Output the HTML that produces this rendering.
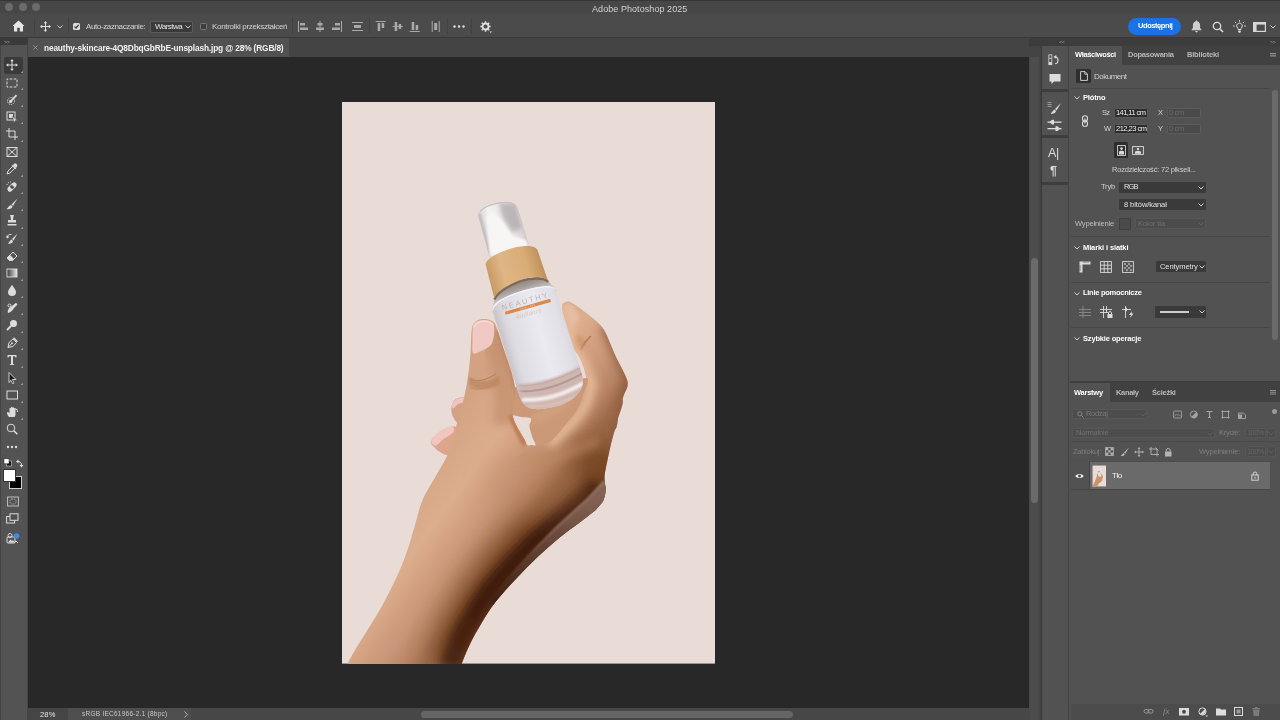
<!DOCTYPE html>
<html lang="pl">
<head>
<meta charset="utf-8">
<title>Adobe Photoshop 2025</title>
<style>
*{box-sizing:border-box;margin:0;padding:0}
html,body{width:1280px;height:720px;overflow:hidden;background:#282828}
body{font-family:"Liberation Sans",sans-serif;font-size:7.5px;color:#d6d6d6;position:relative;-webkit-font-smoothing:antialiased}
.abs{position:absolute}
.t{position:absolute;white-space:nowrap;line-height:10px;will-change:transform}
.b{font-weight:bold}
#titlebar{left:0;top:0;width:1280px;height:15px;background:linear-gradient(#2e2e2e 0,#474747 1.500px,#474747 12px,#4b4b4b 15px)}
#optbar{left:0;top:15px;width:1280px;height:22px;background:#4b4b4b}
#optline{left:0;top:37px;width:1280px;height:1px;background:#3a3a3a}
#tabbar{left:0;top:38px;width:1280px;height:19px;background:#444}
#doctab{left:28px;top:38px;width:261px;height:19px;background:#515151}
#tools{left:0;top:38px;width:28px;height:682px;background:linear-gradient(90deg,#3e3e3e 0,#535353 1.500px,#535353 26.500px,#3c3c3c 28px)}
#toolshead{left:0;top:38px;width:28px;height:7px;background:#3a3a3a}
#canvas{left:28px;top:57px;width:1001px;height:651px;background:#282828}
#status{left:28px;top:708px;width:1001px;height:12px;background:#4e4e4e}
#vscroll{left:1029px;top:57px;width:12px;height:663px;background:linear-gradient(90deg,#474747 0,#4d4d4d 2px,#4d4d4d 9px,#424242 11px)}
#vthumb{left:1031px;top:258px;width:7px;height:245px;background:#6a6a6a;border-radius:4px}
#strip{left:1041px;top:45px;width:27px;height:675px;background:#525252}
#rpanel{left:1068px;top:45px;width:212px;height:675px;background:#525252}
</style>
</head>
<body>
<div class="abs" id="titlebar"></div>
<div class="abs" id="optbar"></div>
<div class="abs" id="optline"></div>
<div class="abs" id="tabbar"></div>
<div class="abs" id="doctab"></div>
<div class="abs" id="canvas"></div>
<div class="abs" id="status"></div>
<div class="abs" id="vscroll"></div>
<div class="abs" id="vthumb"></div>
<div class="abs" id="tools"></div>
<div class="abs" id="toolshead"></div>
<div class="abs" id="strip"></div>
<div class="abs" id="rpanel"></div>


<!-- ===== TITLE BAR ===== -->
<div class="abs" style="left:5px;top:3px;width:8px;height:8px;border-radius:50%;background:#6b6b6b"></div>
<div class="abs" style="left:18.500px;top:3px;width:8px;height:8px;border-radius:50%;background:#6b6b6b"></div>
<div class="abs" style="left:32px;top:3px;width:8px;height:8px;border-radius:50%;background:#6b6b6b"></div>
<div class="t" id="ttl" style="left:591.500px;top:3.600px;font-size:9px;color:#d2d2d2;letter-spacing:0.065px">Adobe Photoshop 2025</div>

<!-- ===== OPTIONS BAR ===== -->
<svg class="abs" style="left:12px;top:20px" width="13" height="12" viewBox="0 0 13 12"><path d="M6.500,0.500 L12.500,6 L11,6 L11,11.500 L7.800,11.500 L7.800,7.800 L5.200,7.800 L5.200,11.500 L2,11.500 L2,6 L0.500,6 Z" fill="#e6e6e6"/></svg>
<div class="abs" style="left:34px;top:18px;width:1px;height:16px;background:#424242"></div>
<svg class="abs" style="left:40px;top:20.500px" width="11" height="11" viewBox="0 0 11 11"><g stroke="#e0e0e0" stroke-width="1" fill="#e0e0e0"><path d="M5.500,1.500V9.500M1.500,5.500H9.500" fill="none"/><path d="M5.500,0L7.200,2.200H3.800Z M5.500,11L7.200,8.800H3.800Z M0,5.500L2.200,3.800V7.200Z M11,5.500L8.800,3.800V7.200Z" stroke="none"/></g></svg>
<svg class="abs" style="left:57px;top:24.500px" width="6" height="4" viewBox="0 0 6 4"><path d="M.5,.5L3,3L5.500,.5" fill="none" stroke="#cfcfcf" stroke-width="1"/></svg>
<div class="abs" style="left:68px;top:18px;width:1px;height:16px;background:#424242"></div>
<div class="abs" style="left:73px;top:23px;width:7px;height:7px;border-radius:1.500px;background:#dcdcdc"></div>
<svg class="abs" style="left:73px;top:23px" width="7" height="7" viewBox="0 0 7 7"><path d="M1.500,3.600L3,5L5.600,1.800" fill="none" stroke="#333" stroke-width="1.200"/></svg>
<div class="t" id="o1" style="left:85.500px;top:21.500px;font-size:8px;color:#d4d4d4;letter-spacing:-0.378px">Auto-zaznaczanie:</div>
<div class="abs" style="left:149.500px;top:20.500px;width:43px;height:12px;background:#3a3a3a;border:1px solid #5c5c5c;border-radius:2px"></div>
<div class="t" id="o2" style="left:154.500px;top:21.500px;font-size:8px;color:#e6e6e6;letter-spacing:-0.518px">Warstwa</div>
<svg class="abs" style="left:185px;top:25px" width="6" height="4" viewBox="0 0 6 4"><path d="M.5,.5L3,3L5.500,.5" fill="none" stroke="#cfcfcf" stroke-width="1"/></svg>
<div class="abs" style="left:199.500px;top:23px;width:7px;height:7px;border-radius:1.500px;background:#3d3d3d;border:1px solid #777"></div>
<div class="t" id="o3" style="left:212px;top:21.500px;font-size:8px;color:#d4d4d4;letter-spacing:-0.307px">Kontrolki przekształceń</div>
<div class="abs" style="left:292px;top:18px;width:1px;height:16px;background:#424242"></div>
<!-- align icons -->
<svg class="abs" style="left:298px;top:20px" width="150" height="13" viewBox="0 0 150 13" fill="#a9a9a9">
<rect x="0" y="1" width="1" height="11"/><rect x="2" y="3" width="5" height="2.500"/><rect x="2" y="7.500" width="8" height="2.500"/>
<rect x="21.500" y="1" width="1" height="11"/><rect x="19.500" y="3" width="5" height="2.500"/><rect x="18" y="7.500" width="8" height="2.500"/>
<rect x="43" y="1" width="1" height="11"/><rect x="37" y="3" width="5" height="2.500"/><rect x="34" y="7.500" width="8" height="2.500"/>
<rect x="54" y="2" width="11" height="1"/><rect x="54" y="10" width="11" height="1"/><rect x="56" y="5" width="7" height="3"/>
<g transform="translate(-3.300 0)"><rect x="81" y="1" width="10" height="1"/><rect x="83" y="3" width="2.500" height="8"/><rect x="87" y="3" width="2.500" height="5"/>
<rect x="98" y="6" width="10" height="1"/><rect x="100" y="2" width="2.500" height="9"/><rect x="104" y="4" width="2.500" height="5"/>
<rect x="115" y="11" width="10" height="1"/><rect x="117" y="2" width="2.500" height="8"/><rect x="121" y="5" width="2.500" height="5"/>
<rect x="137" y="1" width="1" height="11"/><rect x="144" y="1" width="1" height="11"/><rect x="139.500" y="3" width="3" height="7"/></g>
</svg>
<div class="abs" style="left:369px;top:18px;width:1px;height:16px;background:#424242"></div>
<div class="abs" style="left:447px;top:18px;width:1px;height:16px;background:#424242"></div>
<svg class="abs" style="left:453px;top:24.500px" width="12" height="3" viewBox="0 0 12 3" fill="#e0e0e0"><circle cx="1.500" cy="1.500" r="1.200"/><circle cx="6" cy="1.500" r="1.200"/><circle cx="10.500" cy="1.500" r="1.200"/></svg>
<div class="abs" style="left:471px;top:18px;width:1px;height:16px;background:#424242"></div>
<svg class="abs" style="left:479.500px;top:20.500px" width="12" height="12" viewBox="0 0 12 12"><circle cx="5.500" cy="5.500" r="3" fill="none" stroke="#e0e0e0" stroke-width="1.800"/><g stroke="#e0e0e0" stroke-width="1.600"><path d="M5.500,.3V2 M5.500,9V10.700 M.3,5.500H2 M9,5.500H10.700 M1.800,1.800L3,3 M8,8L9.200,9.200 M1.800,9.200L3,8 M8,3L9.200,1.800"/></g><path d="M9.500,10.500h2.500l-1.250,1.500z" fill="#e0e0e0"/></svg>
<!-- right side -->
<div class="abs" style="left:1128px;top:17.500px;width:53px;height:17px;border-radius:8.500px;background:#1b72e4"></div>
<div class="t b" id="o4" style="left:1137.500px;top:21px;font-size:7.500px;color:#fff;letter-spacing:-0.425px">Udostępnij</div>
<svg class="abs" style="left:1190.500px;top:20px" width="11" height="13" viewBox="0 0 11 13" fill="#cfcfcf"><path d="M5.500,.5c.6,0 1,.4 1,1c1.800,.5 2.600,2 2.600,4v2.500l1.400,1.700v.6h-10v-.6l1.400,-1.700v-2.500c0,-2 .8,-3.500 2.600,-4c0,-.6 .4,-1 1,-1z"/><path d="M4.200,11h2.600c0,.8 -.6,1.400 -1.300,1.400s-1.300,-.6 -1.300,-1.400z"/></svg>
<svg class="abs" style="left:1211.500px;top:20.500px" width="12" height="12" viewBox="0 0 12 12"><circle cx="5" cy="5" r="3.700" fill="none" stroke="#dcdcdc" stroke-width="1.300"/><path d="M7.800,7.800L11,11" stroke="#dcdcdc" stroke-width="1.600"/></svg>
<svg class="abs" style="left:1232.500px;top:19.500px" width="13" height="14" viewBox="0 0 13 14"><path d="M6.500,3.200c1.700,0 2.800,1.200 2.800,2.700c0,1 -.5,1.600 -1,2.200c-.3,.4 -.5,.8 -.5,1.400h-2.600c0,-.6 -.2,-1 -.5,-1.400c-.5,-.6 -1,-1.200 -1,-2.200c0,-1.500 1.100,-2.700 2.800,-2.700z" fill="none" stroke="#dcdcdc" stroke-width="1"/><path d="M5.200,10.500h2.600v1.500l-.6,.8h-1.400l-.6,-.8z" fill="#dcdcdc"/><g stroke="#dcdcdc" stroke-width=".9"><path d="M6.500,0V1.800 M2,1.800L3.100,3 M11,1.800L9.900,3 M0,6H1.800 M11.200,6H13"/></g></svg>
<svg class="abs" style="left:1253px;top:22px" width="13" height="10" viewBox="0 0 13 10"><rect x=".6" y=".6" width="11.800" height="8.800" fill="none" stroke="#d6d6d6" stroke-width="1.200"/><rect x=".6" y=".6" width="11.800" height="2" fill="#d6d6d6"/><rect x=".6" y="2" width="3" height="7" fill="#d6d6d6"/></svg>
<svg class="abs" style="left:1270px;top:25px" width="6" height="4" viewBox="0 0 6 4"><path d="M.5,.5L3,3L5.500,.5" fill="none" stroke="#cfcfcf" stroke-width="1"/></svg>

<!-- ===== DOC TAB ===== -->
<svg class="abs" style="left:33px;top:44.500px" width="5" height="5" viewBox="0 0 5 5"><path d="M.3,.3L4.700,4.700M4.700,.3L.3,4.700" stroke="#a0a0a0" stroke-width=".8"/></svg>
<div class="t b" id="tab1" style="left:44px;top:42.500px;font-size:8.300px;color:#f2f2f2;letter-spacing:-0.143px">neauthy-skincare-4Q8DbqGbRbE-unsplash.jpg @ 28% (RGB/8)</div>
<div class="t" style="left:3.500px;top:36.500px;font-size:5.500px;color:#9d9d9d;letter-spacing:-.5px">&gt;&gt;</div>


<!-- ===== LEFT TOOLBAR ===== -->
<div class="abs" style="left:3.500px;top:57px;width:19.500px;height:17px;border-radius:2px;background:#3a3a3a"></div>
<svg class="abs" style="left:6.3px;top:59.4px" width="12" height="12" viewBox="0 0 12 12"><g stroke="#dcdcdc" fill="none" stroke-width="1"><path d="M6,1.500V10.500M1.500,6H10.500"/></g><path d="M6,0L7.800,2.300H4.200Z M6,12L7.800,9.700H4.200Z M0,6L2.300,4.200V7.800Z M12,6L9.700,4.200V7.800Z" fill="#dcdcdc"/></svg>
<svg class="abs" style="left:20px;top:69.9px" width="3" height="3" viewBox="0 0 3 3"><path d="M3,.8V3H.8Z" fill="#9c9c9c"/></svg>
<svg class="abs" style="left:6.3px;top:76.8px" width="12" height="12" viewBox="0 0 12 12"><rect x="1" y="2" width="10" height="8" stroke="#dcdcdc" fill="none" stroke-width="1" stroke-dasharray="2.600 1.400" stroke-dashoffset="1.300"/></svg>
<svg class="abs" style="left:20px;top:87.3px" width="3" height="3" viewBox="0 0 3 3"><path d="M3,.8V3H.8Z" fill="#9c9c9c"/></svg>
<svg class="abs" style="left:6.3px;top:93.6px" width="12" height="12" viewBox="0 0 12 12"><circle cx="5" cy="7" r="3.500" stroke="#dcdcdc" fill="none" stroke-width="1" stroke-dasharray="1.200 1"/><path d="M5,7L10.500,1.200" stroke="#dcdcdc" stroke-width="1.800"/><circle cx="4.600" cy="7.400" r="1.600" fill="#dcdcdc"/></svg>
<svg class="abs" style="left:20px;top:104.1px" width="3" height="3" viewBox="0 0 3 3"><path d="M3,.8V3H.8Z" fill="#9c9c9c"/></svg>
<svg class="abs" style="left:6.3px;top:110.8px" width="12" height="12" viewBox="0 0 12 12"><rect x="1" y="1" width="8" height="8" stroke="#dcdcdc" fill="none" stroke-width="1"/><rect x="3" y="3" width="4" height="4" fill="#dcdcdc"/><path d="M6.500,5.500L11.500,9.500L9,9.800L8,12Z" fill="#dcdcdc" stroke="#4f4f4f" stroke-width=".5"/></svg>
<svg class="abs" style="left:20px;top:121.3px" width="3" height="3" viewBox="0 0 3 3"><path d="M3,.8V3H.8Z" fill="#9c9c9c"/></svg>
<svg class="abs" style="left:6.3px;top:128.0px" width="12" height="12" viewBox="0 0 12 12"><g stroke="#dcdcdc" fill="none" stroke-width="1" stroke-width="1.300"><path d="M3,0V9H12M0,3H9V12"/></g></svg>
<svg class="abs" style="left:20px;top:138.5px" width="3" height="3" viewBox="0 0 3 3"><path d="M3,.8V3H.8Z" fill="#9c9c9c"/></svg>
<svg class="abs" style="left:6.3px;top:145.7px" width="12" height="12" viewBox="0 0 12 12"><rect x="1" y="1.500" width="10" height="9" stroke="#dcdcdc" fill="none" stroke-width="1"/><path d="M1,1.500L11,10.500M11,1.500L1,10.500" stroke="#dcdcdc" fill="none" stroke-width="1"/></svg>
<svg class="abs" style="left:6.3px;top:163.2px" width="12" height="12" viewBox="0 0 12 12"><path d="M1,11L2,8L7,3L9,5L4,10Z" stroke="#dcdcdc" fill="none" stroke-width="1"/><path d="M7,2L8.500,.5C9.500,-.2 12,2 11.200,3.200L10,5Z" fill="#dcdcdc"/><path d="M6.200,2.200L9.800,5.800" stroke="#dcdcdc" stroke-width="1.500"/></svg>
<svg class="abs" style="left:20px;top:173.7px" width="3" height="3" viewBox="0 0 3 3"><path d="M3,.8V3H.8Z" fill="#9c9c9c"/></svg>
<svg class="abs" style="left:6.3px;top:180.6px" width="12" height="12" viewBox="0 0 12 12"><g transform="rotate(-45 6 6)"><rect x="0.500" y="3.500" width="11" height="5" rx="2.500" fill="#dcdcdc"/><rect x="4.500" y="4.200" width="3" height="3.600" fill="#4f4f4f"/></g><path d="M1,4A4,4 0 0 1 5,1" stroke="#dcdcdc" fill="none" stroke-width="1" stroke-dasharray="1.200 1"/></svg>
<svg class="abs" style="left:20px;top:191.1px" width="3" height="3" viewBox="0 0 3 3"><path d="M3,.8V3H.8Z" fill="#9c9c9c"/></svg>
<svg class="abs" style="left:6.3px;top:197.9px" width="12" height="12" viewBox="0 0 12 12"><path d="M11.500,.5L5.500,6.500L7,8Z" fill="#dcdcdc"/><path d="M5,7L6.500,8.500C6,11 3,11.500 .5,11C2.500,10 2.500,7.500 5,7Z" fill="#dcdcdc"/></svg>
<svg class="abs" style="left:20px;top:208.4px" width="3" height="3" viewBox="0 0 3 3"><path d="M3,.8V3H.8Z" fill="#9c9c9c"/></svg>
<svg class="abs" style="left:6.3px;top:215.2px" width="12" height="12" viewBox="0 0 12 12"><path d="M4.500,1.500a1.800,1.800 0 1 1 3,0L7,5H10V7.500H2V5H5Z" fill="#dcdcdc"/><rect x="1.500" y="9" width="9" height="1.500" fill="#dcdcdc"/></svg>
<svg class="abs" style="left:20px;top:225.7px" width="3" height="3" viewBox="0 0 3 3"><path d="M3,.8V3H.8Z" fill="#9c9c9c"/></svg>
<svg class="abs" style="left:6.3px;top:232.5px" width="12" height="12" viewBox="0 0 12 12"><path d="M11.500,.5L6,6L7.500,7.500Z" fill="#dcdcdc"/><path d="M5.500,6.500L7,8C6.500,10.500 4,11 2,10.500C3.500,9.500 3.500,7.500 5.500,6.500Z" fill="#dcdcdc"/><path d="M1,5A3.500,3.500 0 0 1 5.500,1.500" stroke="#dcdcdc" fill="none" stroke-width="1"/><path d="M.2,2.500L1,5.500L3.500,4Z" fill="#dcdcdc"/></svg>
<svg class="abs" style="left:20px;top:243.0px" width="3" height="3" viewBox="0 0 3 3"><path d="M3,.8V3H.8Z" fill="#9c9c9c"/></svg>
<svg class="abs" style="left:6.3px;top:249.8px" width="12" height="12" viewBox="0 0 12 12"><path d="M1,8L7,2L11,6L6.500,10.500H3.500Z" stroke="#dcdcdc" fill="none" stroke-width="1" stroke-width="1.100"/><path d="M4,5L8,9L6.500,10.500H3.500L1,8Z" fill="#dcdcdc"/></svg>
<svg class="abs" style="left:20px;top:260.3px" width="3" height="3" viewBox="0 0 3 3"><path d="M3,.8V3H.8Z" fill="#9c9c9c"/></svg>
<svg class="abs" style="left:6.3px;top:267.1px" width="12" height="12" viewBox="0 0 12 12"><defs><linearGradient id="tg"><stop offset="0" stop-color="#3a3a3a"/><stop offset="1" stop-color="#e8e8e8"/></linearGradient></defs><rect x="1" y="2" width="10" height="8" fill="url(#tg)" stroke="#dcdcdc" stroke-width=".9"/></svg>
<svg class="abs" style="left:20px;top:277.6px" width="3" height="3" viewBox="0 0 3 3"><path d="M3,.8V3H.8Z" fill="#9c9c9c"/></svg>
<svg class="abs" style="left:6.3px;top:284.4px" width="12" height="12" viewBox="0 0 12 12"><path d="M6,.8C8,4 10,6 10,8A4,4 0 0 1 2,8C2,6 4,4 6,.8Z" fill="#dcdcdc"/></svg>
<svg class="abs" style="left:20px;top:294.9px" width="3" height="3" viewBox="0 0 3 3"><path d="M3,.8V3H.8Z" fill="#9c9c9c"/></svg>
<svg class="abs" style="left:6.3px;top:301.7px" width="12" height="12" viewBox="0 0 12 12"><path d="M2,11C1,8 3,6 6,4L10,.8L11.500,2.500L8,6C7,8 5,10.500 2,11Z" fill="#dcdcdc"/><circle cx="3.500" cy="3.500" r="1.500" stroke="#dcdcdc" fill="none" stroke-width="1"/></svg>
<svg class="abs" style="left:20px;top:312.2px" width="3" height="3" viewBox="0 0 3 3"><path d="M3,.8V3H.8Z" fill="#9c9c9c"/></svg>
<svg class="abs" style="left:6.3px;top:319.2px" width="12" height="12" viewBox="0 0 12 12"><circle cx="7.500" cy="4.500" r="3.500" fill="#dcdcdc"/><path d="M5,7L1,11" stroke="#dcdcdc" stroke-width="1.800"/></svg>
<svg class="abs" style="left:20px;top:329.7px" width="3" height="3" viewBox="0 0 3 3"><path d="M3,.8V3H.8Z" fill="#9c9c9c"/></svg>
<svg class="abs" style="left:6.3px;top:336.8px" width="12" height="12" viewBox="0 0 12 12"><path d="M2,10.500L3,5.500L7,2L10.500,5.500L7,9.500Z" stroke="#dcdcdc" fill="none" stroke-width="1" stroke-width="1.100"/><circle cx="6" cy="6.300" r="1" fill="#dcdcdc"/><path d="M2,10.500L5.500,6.800" stroke="#dcdcdc" fill="none" stroke-width="1" stroke-width=".8"/><path d="M7.500,.8L11.500,4.800" stroke="#dcdcdc" stroke-width="1.600"/></svg>
<svg class="abs" style="left:20px;top:347.3px" width="3" height="3" viewBox="0 0 3 3"><path d="M3,.8V3H.8Z" fill="#9c9c9c"/></svg>
<svg class="abs" style="left:6.3px;top:354.3px" width="12" height="12" viewBox="0 0 12 12"><path d="M1.500,1H10.500V3.500H9.500L9,2.300H7V10L8.300,10.400V11H3.700V10.400L5,10V2.300H3L2.500,3.500H1.500Z" fill="#dcdcdc"/></svg>
<svg class="abs" style="left:20px;top:364.8px" width="3" height="3" viewBox="0 0 3 3"><path d="M3,.8V3H.8Z" fill="#9c9c9c"/></svg>
<svg class="abs" style="left:6.3px;top:371.8px" width="12" height="12" viewBox="0 0 12 12"><path d="M3,.5L10,7.500H6.300L8,11L6.500,11.700L4.800,8.200L3,10.500Z" fill="#1e1e1e" stroke="#dcdcdc" stroke-width=".9"/></svg>
<svg class="abs" style="left:20px;top:382.3px" width="3" height="3" viewBox="0 0 3 3"><path d="M3,.8V3H.8Z" fill="#9c9c9c"/></svg>
<svg class="abs" style="left:6.3px;top:389.0px" width="12" height="12" viewBox="0 0 12 12"><rect x="1" y="2" width="10.500" height="8" stroke="#dcdcdc" fill="none" stroke-width="1" stroke-width="1.200"/></svg>
<svg class="abs" style="left:20px;top:399.5px" width="3" height="3" viewBox="0 0 3 3"><path d="M3,.8V3H.8Z" fill="#9c9c9c"/></svg>
<svg class="abs" style="left:6.3px;top:406.0px" width="12" height="12" viewBox="0 0 12 12"><path d="M3,11C1,8.500 .5,6.500 1.500,6C2.500,5.700 3,6.700 3.500,7.500V2.500C3.500,1.500 5,1.500 5,2.500V1.500C5,.5 6.500,.5 6.500,1.500V2C6.500,1 8,1 8,2V3C8,2.200 9.500,2.200 9.500,3V8C9.500,9.500 9,10.500 8.500,11Z" fill="#dcdcdc"/><path d="M8.500,8.500A3,3 0 1 1 11.500,6" stroke="#dcdcdc" fill="none" stroke-width="1" stroke-width=".8"/></svg>
<svg class="abs" style="left:20px;top:416.5px" width="3" height="3" viewBox="0 0 3 3"><path d="M3,.8V3H.8Z" fill="#9c9c9c"/></svg>
<svg class="abs" style="left:6.3px;top:423.3px" width="12" height="12" viewBox="0 0 12 12"><circle cx="5" cy="5" r="3.800" stroke="#dcdcdc" fill="none" stroke-width="1" stroke-width="1.200"/><path d="M7.800,7.800L11.300,11.300" stroke="#dcdcdc" stroke-width="1.600"/></svg>
<svg class="abs" style="left:6.3px;top:440.5px" width="12" height="12" viewBox="0 0 12 12"><circle cx="2" cy="6" r="1.200" fill="#dcdcdc"/><circle cx="6" cy="6" r="1.200" fill="#dcdcdc"/><circle cx="10" cy="6" r="1.200" fill="#dcdcdc"/></svg>
<svg class="abs" style="left:2.500px;top:457.500px" width="22" height="10" viewBox="0 0 22 10"><rect x="3.500" y="3" width="5" height="5" fill="#111" stroke="#ddd" stroke-width=".6"/><rect x="1" y=".8" width="5" height="5" fill="#fff" stroke="#222" stroke-width=".5"/><path d="M14.500,3.500A3.500,3.500 0 0 1 18.500,7.500" fill="none" stroke="#dcdcdc" stroke-width="1"/><path d="M13,3.500L15.500,1.500V5.500Z M18.500,9.500L16.500,7H20.500Z" fill="#dcdcdc"/></svg>
<div class="abs" style="left:9px;top:476px;width:13px;height:13px;background:#000;border:1px solid #d0d0d0"></div>
<div class="abs" style="left:3px;top:469px;width:13px;height:13px;background:#fff;border:1px solid #333"></div>
<svg class="abs" style="left:6.500px;top:495.500px" width="12" height="11" viewBox="0 0 12 11"><rect x=".6" y="1" width="10.800" height="9" fill="none" stroke="#c8c8c8" stroke-width=".9"/><rect x="3" y="3" width="6" height="5" rx="2" fill="none" stroke="#c8c8c8" stroke-width=".8" stroke-dasharray="1 .8"/></svg>
<svg class="abs" style="left:6px;top:512.500px" width="13" height="11" viewBox="0 0 13 11"><rect x=".6" y="3.500" width="8" height="6.500" fill="none" stroke="#dcdcdc" stroke-width="1"/><rect x="4" y=".8" width="8" height="6.500" fill="#4f4f4f" stroke="#dcdcdc" stroke-width="1"/></svg>
<svg class="abs" style="left:5.500px;top:531.500px" width="15" height="13" viewBox="0 0 15 13"><rect x="1" y="5" width="8" height="6" rx="1" fill="none" stroke="#dcdcdc" stroke-width="1"/><path d="M2,10.500L4.500,7.500L6,9L7,8L8.500,10.500Z" fill="#dcdcdc"/><circle cx="4" cy="3.500" r="2" fill="none" stroke="#dcdcdc" stroke-width=".9"/><circle cx="10.500" cy="4" r="2.800" fill="#3d8be8"/><path d="M8,11L10,9L12,11" fill="none" stroke="#dcdcdc" stroke-width="1"/></svg>


<!-- ===== RIGHT: header rows ===== -->
<div class="abs" style="left:1029px;top:38px;width:251px;height:7.500px;background:#3c3c3c"></div>
<div class="t" style="left:1058.500px;top:36.500px;font-size:5.500px;color:#9d9d9d;letter-spacing:-.5px">&lt;&lt;</div>
<div class="t" style="left:1270px;top:36.500px;font-size:5.500px;color:#9d9d9d;letter-spacing:-.5px">&gt;&gt;</div>
<div class="abs" style="left:1041px;top:45.500px;width:1px;height:675px;background:#3a3a3a"></div>
<div class="abs" style="left:1067.800px;top:45.500px;width:1.700px;height:675px;background:#434343"></div>
<!-- icon strip groups -->
<div class="abs" style="left:1042px;top:89.3px;width:25.800px;height:2.600px;background:#3e3e3e"></div>
<div class="abs" style="left:1042px;top:135.3px;width:25.800px;height:2.600px;background:#3e3e3e"></div>
<div class="abs" style="left:1042px;top:182.3px;width:25.800px;height:2.600px;background:#3e3e3e"></div>
<!-- history -->
<svg class="abs" style="left:1048.300px;top:54.300px" width="12" height="12" viewBox="0 0 14 14"><rect x="1" y="1" width="3.500" height="11.500" fill="none" stroke="#dcdcdc" stroke-width=".9"/><rect x="1.500" y="4.500" width="2.500" height="1" fill="#dcdcdc"/><rect x="1" y="9.500" width="3.500" height="3" fill="#dcdcdc"/><path d="M8,11.500A4,4.200 0 0 0 8.500,3.200" fill="none" stroke="#dcdcdc" stroke-width="1.200"/><path d="M6.300,3.600L9.600,1.200V5.500Z" fill="#dcdcdc"/></svg>
<!-- comment -->
<svg class="abs" style="left:1048.500px;top:73px" width="12" height="12" viewBox="0 0 12 12"><path d="M.5,1H11.500V8.500H5L2.500,11V8.500H.5Z" fill="#dcdcdc"/></svg>
<!-- brush settings -->
<svg class="abs" style="left:1047px;top:100.500px" width="15" height="14" viewBox="0 0 15 14"><g fill="#9a9a9a"><rect x="0.500" y="1" width="4" height="1"/><rect x="0.500" y="3" width="4" height="1"/><rect x="0.500" y="5" width="4" height="1"/></g><path d="M14,2L8,8L9.500,9.500Z" fill="#dcdcdc"/><path d="M7.500,8.500L9,10C8.500,12.500 6,13 3.500,12.500C5.500,11.500 5.500,9.500 7.500,8.500Z" fill="#dcdcdc"/></svg>
<!-- adjustments sliders -->
<svg class="abs" style="left:1047px;top:118.500px" width="15" height="13" viewBox="0 0 15 13"><g fill="#dcdcdc"><rect x="0.500" y="2.500" width="14" height="1.300"/><path d="M2.500,3.100L5,.8H7V5.400H5Z"/><rect x="0.500" y="9" width="14" height="1.300"/><path d="M13,9.600L10.500,7.300H8.500V12H10.500Z"/></g></svg>
<!-- A| -->
<div class="t" style="left:1048px;top:146px;font-size:12.500px;line-height:14px;color:#dcdcdc;letter-spacing:-.3px">A|</div>
<!-- pilcrow -->
<div class="t b" style="left:1049.500px;top:163.500px;font-size:12.500px;line-height:14px;color:#dcdcdc">¶</div>

<!-- ===== PROPERTIES PANEL ===== -->
<div class="abs" style="left:1069.500px;top:45.500px;width:210.500px;height:19px;background:#414141"></div>
<div class="abs" style="left:1069.500px;top:45.500px;width:52.500px;height:19px;background:#525252"></div>
<div class="t b" id="p1" style="left:1074.800px;top:50px;font-size:7.500px;color:#fff;letter-spacing:-0.346px">Właściwości</div>
<div class="t b" id="p2" style="left:1128px;top:50px;font-size:7.500px;color:#b9b9b9;letter-spacing:-0.240px">Dopasowania</div>
<div class="t b" id="p3" style="left:1186.900px;top:50px;font-size:7.500px;color:#b9b9b9;letter-spacing:-0.197px">Biblioteki</div>
<svg class="abs" style="left:1269.500px;top:52.800px" width="6.500" height="4.600" viewBox="0 0 7 5" fill="#909090"><rect y="0" width="7" height="1.100"/><rect y="1.900" width="7" height="1.100"/><rect y="3.800" width="7" height="1.100"/></svg>
<div class="abs" style="left:1076px;top:69px;width:14.500px;height:14px;background:#2f2f2f;border-radius:1px"></div>
<svg class="abs" style="left:1079.500px;top:71px" width="8" height="10" viewBox="0 0 8 10"><path d="M.6,.6H5L7.400,3V9.400H.6Z" fill="none" stroke="#dcdcdc" stroke-width=".9"/><path d="M4.800,.6V3.200H7.400" fill="none" stroke="#dcdcdc" stroke-width=".8"/></svg>
<div class="t" id="p4" style="left:1094px;top:71.500px;font-size:8px;color:#d0d0d0;letter-spacing:-0.496px">Dokument</div>
<div class="abs" style="left:1070.500px;top:87.500px;width:199px;height:1px;background:#464646"></div>
<!-- properties scrollbar -->
<div class="abs" style="left:1271.500px;top:90px;width:6.500px;height:250px;border-radius:3.300px;background:#6a6a6a"></div>
<svg class="abs" style="left:1073.5px;top:95.5px" width="6" height="4" viewBox="0 0 6 4"><path d="M.5,.5L3,3L5.500,.5" fill="none" stroke="#cfcfcf" stroke-width="1"/></svg>

<div class="t b" id="p5" style="left:1082.700px;top:92.500px;font-size:7.500px;color:#fff;letter-spacing:-0.171px">Płótno</div>
<div class="t" id="p6" style="left:1101.900px;top:108px;font-size:7.500px;color:#cfcfcf;letter-spacing:-0.833px">Sz</div>
<div class="abs" style="left:1113.500px;top:107.500px;width:34.500px;height:10.500px;background:#2c2c2c;border:1px solid #5a5a5a;border-radius:1.500px"></div>
<div class="t" id="p7" style="left:1116px;top:108px;font-size:7.500px;color:#f0f0f0;letter-spacing:-0.563px">141,11 cm</div>
<div class="t" id="p8" style="left:1157.500px;top:108px;font-size:7.500px;color:#cfcfcf;letter-spacing:-0.516px">X</div>
<div class="abs" style="left:1166.500px;top:107.500px;width:34.500px;height:10.500px;background:#4a4a4a;border:1px solid #5c5c5c;border-radius:1.500px"></div>
<div class="t" id="p9" style="left:1169px;top:108px;font-size:7.500px;color:#6e6e6e;letter-spacing:-0.316px">0 cm</div>
<svg class="abs" style="left:1080.500px;top:114.500px" width="8" height="12" viewBox="0 0 8 12"><rect x="1.500" y=".8" width="5" height="5.200" rx="2.300" fill="none" stroke="#dcdcdc" stroke-width="1.100"/><rect x="1.500" y="6" width="5" height="5.200" rx="2.300" fill="none" stroke="#dcdcdc" stroke-width="1.100"/><rect x="3.400" y="3.500" width="1.200" height="5" fill="#dcdcdc"/></svg>
<div class="t" id="p10" style="left:1103.500px;top:124px;font-size:7.500px;color:#cfcfcf;letter-spacing:-1.294px">W</div>
<div class="abs" style="left:1113.500px;top:123.500px;width:34.500px;height:10.500px;background:#2c2c2c;border:1px solid #5a5a5a;border-radius:1.500px"></div>
<div class="t" id="p11" style="left:1116px;top:124px;font-size:7.500px;color:#f0f0f0;letter-spacing:-0.503px">212,23 cm</div>
<div class="t" id="p12" style="left:1157.500px;top:124px;font-size:7.500px;color:#cfcfcf;letter-spacing:-0.516px">Y</div>
<div class="abs" style="left:1166.500px;top:123.500px;width:34.500px;height:10.500px;background:#4a4a4a;border:1px solid #5c5c5c;border-radius:1.500px"></div>
<div class="t" id="p13" style="left:1169px;top:124px;font-size:7.500px;color:#6e6e6e;letter-spacing:-0.316px">0 cm</div>
<!-- orientation -->
<div class="abs" style="left:1113.500px;top:142px;width:14.500px;height:15.500px;background:#2d2d2d;border-radius:1.500px"></div>
<svg class="abs" style="left:1116.500px;top:144.500px" width="9" height="11" viewBox="0 0 9 11"><rect x=".6" y=".6" width="7.800" height="9.800" fill="none" stroke="#dcdcdc" stroke-width=".9"/><circle cx="4.500" cy="3.600" r="1.300" fill="#dcdcdc"/><path d="M2,9.500V6.800C2,5.500 7,5.500 7,6.800V9.500Z" fill="#dcdcdc"/></svg>
<svg class="abs" style="left:1132px;top:146px" width="12" height="9" viewBox="0 0 12 9"><rect x=".6" y=".6" width="10.800" height="7.800" fill="none" stroke="#dcdcdc" stroke-width=".9"/><circle cx="6" cy="3" r="1.200" fill="#dcdcdc"/><path d="M3,7.800V6C3,4.600 9,4.600 9,6V7.800Z" fill="#dcdcdc"/></svg>
<div class="t" id="p14" style="left:1111.800px;top:164.500px;font-size:7.500px;color:#cfcfcf;letter-spacing:-0.212px">Rozdzielczość: 72 pikseli...</div>
<div class="t" id="p15" style="left:1101px;top:182px;font-size:7.500px;color:#cfcfcf;letter-spacing:-0.184px">Tryb</div>
<div class="abs" style="left:1118.500px;top:182px;width:87px;height:10.500px;background:#3a3a3a;border-radius:1.500px"></div>
<div class="t" id="p16" style="left:1123.800px;top:182px;font-size:7.500px;color:#e2e2e2;letter-spacing:-0.922px">RGB</div>
<svg class="abs" style="left:1197.5px;top:185.5px" width="6" height="4" viewBox="0 0 6 4"><path d="M.5,.5L3,3L5.500,.5" fill="none" stroke="#cfcfcf" stroke-width="1"/></svg>

<div class="abs" style="left:1118.500px;top:199px;width:87px;height:10.500px;background:#3a3a3a;border-radius:1.500px"></div>
<div class="t" id="p17" style="left:1123.800px;top:199.500px;font-size:7.500px;color:#e2e2e2;letter-spacing:-0.075px">8 bitów/kanał</div>
<svg class="abs" style="left:1197.5px;top:203px" width="6" height="4" viewBox="0 0 6 4"><path d="M.5,.5L3,3L5.500,.5" fill="none" stroke="#cfcfcf" stroke-width="1"/></svg>

<div class="t" id="p18" style="left:1075.400px;top:218.500px;font-size:7.500px;color:#bdbdbd;letter-spacing:-0.154px">Wypełnienie</div>
<div class="abs" style="left:1118.500px;top:217.500px;width:12px;height:12px;background:#4a4a4a;border:1px solid #404040"></div>
<div class="abs" style="left:1134.500px;top:218px;width:71px;height:11px;background:#4c4c4c;border:1px solid #575757;border-radius:1.500px"></div>
<div class="t" id="p19" style="left:1138px;top:218.500px;font-size:7.500px;color:#6f6f6f;letter-spacing:-0.057px">Kolor tła</div>
<svg class="abs" style="left:1197.5px;top:222px" width="6" height="4" viewBox="0 0 6 4"><path d="M.5,.5L3,3L5.500,.5" fill="none" stroke="#626262" stroke-width="1"/></svg>

<div class="abs" style="left:1070.500px;top:236px;width:199px;height:1px;background:#464646"></div>
<svg class="abs" style="left:1073.5px;top:246px" width="6" height="4" viewBox="0 0 6 4"><path d="M.5,.5L3,3L5.500,.5" fill="none" stroke="#cfcfcf" stroke-width="1"/></svg>

<div class="t b" id="p20" style="left:1082.800px;top:242.500px;font-size:7.500px;color:#fff;letter-spacing:-0.114px">Miarki i siatki</div>
<svg class="abs" style="left:1078.500px;top:260.500px" width="12" height="12" viewBox="0 0 12 12"><path d="M.5,.5H11.500V3.500H3.500V11.500H.5Z" fill="#dcdcdc"/><g stroke="#4f4f4f" stroke-width=".7"><path d="M5,.5V2M7,.5V2M9,.5V2M.5,5H2M.5,7H2M.5,9H2"/></g></svg>
<svg class="abs" style="left:1100px;top:260.500px" width="12" height="12" viewBox="0 0 12 12"><g fill="none" stroke="#dcdcdc" stroke-width=".9"><rect x=".6" y=".6" width="10.800" height="10.800"/><path d="M4.200,.6V11.400M7.800,.6V11.400M.6,4.200H11.400M.6,7.800H11.400"/></g></svg>
<svg class="abs" style="left:1122px;top:260.500px" width="12" height="12" viewBox="0 0 12 12"><rect x=".6" y=".6" width="10.800" height="10.800" fill="none" stroke="#dcdcdc" stroke-width=".9"/><g fill="#9c9c9c"><rect x="2" y="2" width="2" height="2"/><rect x="6" y="2" width="2" height="2"/><rect x="4" y="4" width="2" height="2"/><rect x="8" y="4" width="2" height="2"/><rect x="2" y="6" width="2" height="2"/><rect x="6" y="6" width="2" height="2"/><rect x="4" y="8" width="2" height="2"/><rect x="8" y="8" width="2" height="2"/></g></svg>
<div class="abs" style="left:1156px;top:261px;width:49.500px;height:11px;background:#3a3a3a;border-radius:1.500px"></div>
<div class="t" id="p21" style="left:1160px;top:261.500px;font-size:7.500px;color:#e2e2e2;letter-spacing:-0.074px">Centymetry</div>
<svg class="abs" style="left:1198.5px;top:265px" width="6" height="4" viewBox="0 0 6 4"><path d="M.5,.5L3,3L5.500,.5" fill="none" stroke="#cfcfcf" stroke-width="1"/></svg>

<div class="abs" style="left:1070.500px;top:282px;width:199px;height:1px;background:#464646"></div>
<svg class="abs" style="left:1073.5px;top:291.5px" width="6" height="4" viewBox="0 0 6 4"><path d="M.5,.5L3,3L5.500,.5" fill="none" stroke="#cfcfcf" stroke-width="1"/></svg>

<div class="t b" id="p22" style="left:1082.800px;top:288px;font-size:7.500px;color:#fff;letter-spacing:-0.271px">Linie pomocnicze</div>
<svg class="abs" style="left:1078.500px;top:306px" width="12" height="12" viewBox="0 0 12 12"><g stroke="#8a8a8a" stroke-width=".9"><path d="M4,0V12M0,3.500H12M0,6.500H12M0,9.500H12"/></g></svg>
<svg class="abs" style="left:1100px;top:306px" width="13" height="12" viewBox="0 0 13 12"><g stroke="#dcdcdc" stroke-width=".9"><path d="M3.500,0V12M6.500,0V7M0,3.500H12M0,6.500H8"/></g><rect x="7.500" y="8" width="5" height="4" fill="#dcdcdc"/><path d="M8.500,8V7A1.500,1.500 0 0 1 11.500,7V8" fill="none" stroke="#dcdcdc" stroke-width=".9"/></svg>
<svg class="abs" style="left:1122px;top:306px" width="13" height="12" viewBox="0 0 13 12"><g stroke="#dcdcdc" stroke-width=".9"><path d="M3.500,0V12M0,3.500H9"/></g><path d="M5,1.500L2.500,3.500L5,5.500Z" fill="#dcdcdc"/><path d="M10,5L7,9H9L8,12L11.500,7.500H9.500Z" fill="#dcdcdc"/></svg>
<div class="abs" style="left:1154.500px;top:306px;width:51px;height:11.500px;background:#3a3a3a;border-radius:1.500px"></div>
<div class="abs" style="left:1160px;top:311.300px;width:29px;height:1.400px;background:#cfcfcf"></div>
<svg class="abs" style="left:1198.5px;top:310px" width="6" height="4" viewBox="0 0 6 4"><path d="M.5,.5L3,3L5.500,.5" fill="none" stroke="#cfcfcf" stroke-width="1"/></svg>

<div class="abs" style="left:1070.500px;top:327px;width:199px;height:1px;background:#464646"></div>
<svg class="abs" style="left:1073.5px;top:337px" width="6" height="4" viewBox="0 0 6 4"><path d="M.5,.5L3,3L5.500,.5" fill="none" stroke="#cfcfcf" stroke-width="1"/></svg>

<div class="t b" id="p23" style="left:1082.800px;top:333.500px;font-size:7.500px;color:#fff;letter-spacing:-0.167px">Szybkie operacje</div>

<!-- ===== LAYERS PANEL ===== -->
<div class="abs" style="left:1069.500px;top:380.500px;width:210.500px;height:2px;background:#3f3f3f"></div>
<div class="abs" style="left:1069.500px;top:382.500px;width:210.500px;height:19.500px;background:#414141"></div>
<div class="abs" style="left:1069.500px;top:382.500px;width:40.500px;height:19.500px;background:#525252"></div>
<div class="t b" id="l1" style="left:1074.400px;top:387.500px;font-size:7.500px;color:#fff;letter-spacing:-0.240px">Warstwy</div>
<div class="t b" id="l2" style="left:1116.200px;top:387.500px;font-size:7.500px;color:#b9b9b9;letter-spacing:-0.318px">Kanały</div>
<div class="t b" id="l3" style="left:1151.800px;top:387.500px;font-size:7.500px;color:#b9b9b9;letter-spacing:-0.248px">Ścieżki</div>
<svg class="abs" style="left:1269.500px;top:390.300px" width="6.500" height="4.600" viewBox="0 0 7 5" fill="#909090"><rect y="0" width="7" height="1.100"/><rect y="1.900" width="7" height="1.100"/><rect y="3.800" width="7" height="1.100"/></svg>
<!-- filter row -->
<div class="abs" style="left:1072px;top:409px;width:75px;height:10px;background:#4d4d4d;border:1px solid #575757;border-radius:1.500px"></div>
<svg class="abs" style="left:1076.500px;top:410.500px" width="7" height="7" viewBox="0 0 7 7"><circle cx="2.800" cy="2.800" r="2.100" fill="none" stroke="#8a8a8a" stroke-width=".9"/><path d="M4.400,4.400L6.500,6.500" stroke="#8a8a8a" stroke-width="1"/></svg>
<div class="t" id="l4" style="left:1085.500px;top:409px;font-size:7.500px;color:#7a7a7a;letter-spacing:-0.310px">Rodzaj</div>
<svg class="abs" style="left:1140px;top:413px" width="6" height="4" viewBox="0 0 6 4"><path d="M.5,.5L3,3L5.500,.5" fill="none" stroke="#5e5e5e" stroke-width="1"/></svg>

<svg class="abs" style="left:1172.500px;top:410px" width="78" height="9" viewBox="0 0 78 9"><g fill="none" stroke="#a4a4a4" stroke-width=".9"><rect x=".6" y="1" width="8" height="7" rx=".8"/><path d="M1.500,6.500L3.500,4L5,5.500L6,4.500L7.800,6.500" stroke-width=".7"/><circle cx="20.800" cy="4.500" r="3.500"/><path d="M33.500,1.500H39.500M36.500,1.500V7.500M35,7.500H38" stroke-width="1.200"/><rect x="49.500" y="1.500" width="6" height="6"/><path d="M48,1.500H57M48,7.500H57M49.500,0V9M55.500,0V9" stroke-width=".6"/><path d="M65.500,3H70.500L72.500,5V8.500H65.500Z"/></g><path d="M18.300,7A3.500,3.500 0 0 0 23.300,2Z" fill="#a4a4a4"/><rect x="65" y="4.500" width="4" height="4" fill="#a4a4a4"/></svg>
<div class="abs" style="left:1271.500px;top:408.500px;width:5px;height:5px;border-radius:50%;background:#9a9a9a"></div>
<!-- blend row -->
<div class="abs" style="left:1072px;top:427.500px;width:142.500px;height:10.500px;background:#4d4d4d;border:1px solid #575757;border-radius:1.500px"></div>
<div class="t" id="l5" style="left:1076px;top:428px;font-size:7.500px;color:#747474;letter-spacing:-0.188px">Normalnie</div>
<svg class="abs" style="left:1207px;top:431.5px" width="6" height="4" viewBox="0 0 6 4"><path d="M.5,.5L3,3L5.500,.5" fill="none" stroke="#5e5e5e" stroke-width="1"/></svg>

<div class="t" id="l6" style="left:1218.900px;top:428px;font-size:7.500px;color:#7e7e7e;letter-spacing:-0.260px">Krycie:</div>
<div class="abs" style="left:1244.500px;top:427.500px;width:21px;height:10.500px;background:#4d4d4d;border:1px solid #575757;border-radius:1.500px"></div>
<div class="t" id="l7" style="left:1246.500px;top:428px;font-size:7.500px;color:#666;letter-spacing:-0.547px">100%</div>
<div class="abs" style="left:1266.500px;top:427.500px;width:9px;height:10.500px;background:#4d4d4d;border:1px solid #575757;border-radius:1.500px"></div>
<svg class="abs" style="left:1268px;top:431.5px" width="6" height="4" viewBox="0 0 6 4"><path d="M.5,.5L3,3L5.500,.5" fill="none" stroke="#5e5e5e" stroke-width="1"/></svg>

<!-- lock row -->
<div class="abs" style="left:1070.500px;top:440.500px;width:209.500px;height:1px;background:#4a4a4a"></div>
<div class="t" id="l8" style="left:1072.700px;top:446.500px;font-size:7.500px;color:#7e7e7e;letter-spacing:-0.271px">Zablokuj:</div>
<svg class="abs" style="left:1105px;top:446.500px" width="70" height="10" viewBox="0 0 70 10"><g fill="#b4b4b4"><rect x="1" y="1" width="2.300" height="2.300"/><rect x="5.600" y="1" width="2.300" height="2.300"/><rect x="3.300" y="3.300" width="2.300" height="2.300"/><rect x="1" y="5.600" width="2.300" height="2.300"/><rect x="5.600" y="5.600" width="2.300" height="2.300"/></g><rect x=".6" y=".6" width="7.800" height="7.800" fill="none" stroke="#b4b4b4" stroke-width=".8"/><path d="M24,.5L19,5.500L20.300,6.800Z" fill="#b4b4b4"/><path d="M18.500,6L19.800,7.300C19.300,9 17.500,9.300 15.500,9C17,8 17,6.800 18.500,6Z" fill="#b4b4b4"/><g stroke="#b4b4b4" stroke-width=".9"><path d="M34,1V9M30,5H38"/></g><path d="M34,0L35.400,1.800H32.600Z M34,10L35.400,8.200H32.600Z M29,5L30.800,3.600V6.400Z M39,5L37.200,3.600V6.400Z" fill="#b4b4b4"/><g fill="none" stroke="#b4b4b4" stroke-width=".9"><path d="M46,0V7.500H54M44,2H52V9.500"/></g><path d="M50.500,.5L53.500,3.500" stroke="#b4b4b4" stroke-width=".8"/><rect x="60" y="4.500" width="6.500" height="5" fill="#b4b4b4"/><path d="M61.300,4.500V3A2,2 0 0 1 65.200,3V4.500" fill="none" stroke="#b4b4b4" stroke-width="1"/></svg>
<div class="t" id="l9" style="left:1198.900px;top:446.500px;font-size:7.500px;color:#7e7e7e;letter-spacing:-0.148px">Wypełnienie:</div>
<div class="abs" style="left:1244.500px;top:446px;width:21px;height:10.500px;background:#4d4d4d;border:1px solid #575757;border-radius:1.500px"></div>
<div class="t" id="l10" style="left:1246.500px;top:446.500px;font-size:7.500px;color:#666;letter-spacing:-0.547px">100%</div>
<div class="abs" style="left:1266.500px;top:446px;width:9px;height:10.500px;background:#4d4d4d;border:1px solid #575757;border-radius:1.500px"></div>
<svg class="abs" style="left:1268px;top:450px" width="6" height="4" viewBox="0 0 6 4"><path d="M.5,.5L3,3L5.500,.5" fill="none" stroke="#5e5e5e" stroke-width="1"/></svg>

<!-- layer row -->
<div class="abs" style="left:1070.500px;top:461px;width:209.500px;height:1px;background:#4e4e4e"></div>
<div class="abs" style="left:1089px;top:462px;width:180.500px;height:27px;background:#6a6a6a"></div>
<div class="abs" style="left:1088.500px;top:462px;width:1px;height:27px;background:#444"></div>
<div class="abs" style="left:1070.500px;top:489px;width:199px;height:1px;background:#464646"></div>
<svg class="abs" style="left:1074.500px;top:472.500px" width="9" height="6" viewBox="0 0 9 6"><path d="M.3,3C2,.3 7,.3 8.700,3C7,5.700 2,5.700 .3,3Z" fill="#f0f0f0"/><circle cx="4.500" cy="3" r="1.500" fill="#505050"/></svg>
<svg class="abs" style="left:1091.500px;top:464.500px" width="14.500" height="22" viewBox="342 102 373 561" preserveAspectRatio="none"><rect x="342" y="102" width="373" height="561" fill="#e9dcd7" stroke="#3a3a3a" stroke-width="20"/><path d="M347,664L415,525L455,435L470,354L480,320L495,322L515,390L560,300L626,380L605,478L605,497L520,575L462,664Z" fill="#c8946c"/><path d="M479,212L515,203L583,374L584,390L530,408L519,396Z" fill="#e6e2e5"/><path d="M485,264L536,248L548,280L494,298Z" fill="#d2a566"/></svg>
<div class="t" id="l11" style="left:1111.800px;top:470.500px;font-size:8px;color:#f2f2f2;letter-spacing:-0.475px">Tło</div>
<svg class="abs" style="left:1250.500px;top:470.500px" width="8" height="10" viewBox="0 0 8 10"><rect x=".8" y="4" width="6.400" height="5.200" fill="none" stroke="#dcdcdc" stroke-width=".9"/><path d="M2.200,4V2.800A1.800,1.800 0 0 1 5.800,2.800V4" fill="none" stroke="#dcdcdc" stroke-width=".9"/><rect x="3.500" y="5.800" width="1" height="1.800" fill="#dcdcdc"/></svg>
<!-- layers bottom bar -->
<div class="abs" style="left:1070.500px;top:704px;width:209.500px;height:16px;background:#4c4c4c"></div>
<svg class="abs" style="left:1143px;top:706px" width="120" height="11" viewBox="0 0 120 11"><g fill="none" stroke="#9a9a9a" stroke-width="1"><rect x="1" y="3.500" width="5" height="3.500" rx="1.700"/><rect x="5" y="3.500" width="5" height="3.500" rx="1.700"/></g><rect x="36" y="2" width="10" height="7.500" fill="#dcdcdc"/><circle cx="41" cy="5.700" r="2" fill="#4c4c4c"/><circle cx="59.500" cy="5.500" r="3.600" fill="none" stroke="#dcdcdc" stroke-width="1"/><path d="M57,8A3.600,3.600 0 0 0 62,3Z" fill="#dcdcdc"/><path d="M62.500,9.500h2.500l-1.250,1.500z" fill="#dcdcdc"/><path d="M73,2.500H77L78,3.500H83V9.500H73Z" fill="#dcdcdc"/><rect x="91.500" y="1.500" width="8" height="8" fill="none" stroke="#dcdcdc" stroke-width="1"/><rect x="93.500" y="3.500" width="4" height="4" fill="#9a9a9a"/><path d="M110,3.500H116.500L116,10H110.500Z" fill="#7a7a7a"/><rect x="109.500" y="2" width="7.500" height="1.200" fill="#7a7a7a"/><rect x="112" y="1" width="2.500" height="1" fill="#7a7a7a"/></svg>
<div class="t" style="left:1163px;top:705.500px;font-size:9px;font-style:italic;font-family:'Liberation Serif',serif;color:#8c8c8c">fx</div>

<!-- ===== STATUS BAR ===== -->
<div class="abs" style="left:28px;top:708px;width:40px;height:12px;background:#454545"></div>
<div class="t" id="s1" style="left:39.500px;top:709.500px;font-size:7.500px;color:#e6e6e6;letter-spacing:0.161px">28%</div>
<div class="t" id="s2" style="left:81.500px;top:709px;font-size:6.500px;color:#c8c8c8;letter-spacing:0.251px">sRGB IEC61966-2.1 (8bpc)</div>
<svg class="abs" style="left:183.500px;top:710.500px" width="4" height="7" viewBox="0 0 4 7"><path d="M.5,.5L3.300,3.500L.5,6.500" fill="none" stroke="#bdbdbd" stroke-width=".9"/></svg>
<div class="abs" style="left:190.500px;top:708px;width:838.500px;height:12px;background:#474747"></div>
<div class="abs" style="left:421px;top:710.500px;width:372px;height:7px;border-radius:3.500px;background:#656565"></div>

<!-- PHOTO -->
<svg class="abs" id="photo" style="left:342px;top:102px" width="373.300" height="561.800" viewBox="342 102 373.300 561.800">
<defs>
<linearGradient id="gArm" gradientUnits="userSpaceOnUse" x1="390" y1="560" x2="490" y2="633">
<stop offset="0" stop-color="#e0b48f"/><stop offset=".3" stop-color="#d7a47c"/><stop offset=".6" stop-color="#c8916a"/><stop offset="1" stop-color="#b07a55"/>
</linearGradient>
<linearGradient id="gSkin" gradientUnits="userSpaceOnUse" x1="357" y1="545.600" x2="486.500" y2="639.700">
<stop offset="0" stop-color="#d3a283"/><stop offset=".31" stop-color="#dcae8e"/><stop offset=".44" stop-color="#d3a181"/><stop offset=".56" stop-color="#c89678"/><stop offset=".69" stop-color="#b78364"/><stop offset=".78" stop-color="#a06c4c"/><stop offset="1" stop-color="#8a5a3c"/>
</linearGradient>
<linearGradient id="gLine" gradientUnits="userSpaceOnUse" x1="604" y1="481" x2="506" y2="580">
<stop offset="0" stop-color="#a58a7b" stop-opacity=".85"/><stop offset=".5" stop-color="#a08474" stop-opacity=".7"/><stop offset="1" stop-color="#8a6a58" stop-opacity="0"/>
</linearGradient>
<linearGradient id="gNeck" gradientUnits="userSpaceOnUse" x1="518" y1="281" x2="522" y2="294">
<stop offset="0" stop-color="#8c8078"/><stop offset=".5" stop-color="#a59b96"/><stop offset="1" stop-color="#c6c0bf"/>
</linearGradient>
<linearGradient id="gCore" gradientUnits="userSpaceOnUse" x1="598" y1="484" x2="455" y2="660">
<stop offset="0" stop-color="#4a2412"/><stop offset=".25" stop-color="#3f1c0c"/><stop offset=".7" stop-color="#3f1c0c"/><stop offset="1" stop-color="#4c2613"/>
</linearGradient>
<linearGradient id="gBand" gradientUnits="userSpaceOnUse" x1="604" y1="485" x2="500" y2="600">
<stop offset="0" stop-color="#85665a"/><stop offset=".45" stop-color="#6b4a3b"/><stop offset="1" stop-color="#432413"/>
</linearGradient>
<linearGradient id="gIdx" gradientUnits="userSpaceOnUse" x1="565" y1="340" x2="628" y2="395">
<stop offset="0" stop-color="#dcab88"/><stop offset=".55" stop-color="#cd9a72"/><stop offset="1" stop-color="#a9744f"/>
</linearGradient>
<linearGradient id="gThumb" gradientUnits="userSpaceOnUse" x1="462" y1="380" x2="516" y2="392">
<stop offset="0" stop-color="#dcae8b"/><stop offset=".5" stop-color="#d3a07a"/><stop offset="1" stop-color="#b98560"/>
</linearGradient>
<linearGradient id="gBody" gradientUnits="userSpaceOnUse" x1="500" y1="352" x2="578" y2="330">
<stop offset="0" stop-color="#c9c3c8"/><stop offset=".22" stop-color="#dfdde4"/><stop offset=".55" stop-color="#ebeaf0"/><stop offset=".8" stop-color="#e2e0e7"/><stop offset="1" stop-color="#cfcacf"/>
</linearGradient>
<linearGradient id="gWood" gradientUnits="userSpaceOnUse" x1="487" y1="282" x2="546" y2="264">
<stop offset="0" stop-color="#c4955e"/><stop offset=".3" stop-color="#dfb684"/><stop offset=".7" stop-color="#d9ac77"/><stop offset="1" stop-color="#b98a55"/>
</linearGradient>
<linearGradient id="gCap" gradientUnits="userSpaceOnUse" x1="481" y1="236" x2="526" y2="222">
<stop offset="0" stop-color="#cbc4c4"/><stop offset=".3" stop-color="#f3f1f2"/><stop offset=".65" stop-color="#e9e4e4"/><stop offset="1" stop-color="#d3cac9"/>
</linearGradient>
<filter id="b8" x="-50%" y="-50%" width="200%" height="200%"><feGaussianBlur stdDeviation="8"/></filter>
<filter id="b12" x="-50%" y="-50%" width="200%" height="200%"><feGaussianBlur stdDeviation="12"/></filter>
<filter id="b5" x="-50%" y="-50%" width="200%" height="200%"><feGaussianBlur stdDeviation="5"/></filter>
<filter id="b4" x="-50%" y="-50%" width="200%" height="200%"><feGaussianBlur stdDeviation="4"/></filter>
<filter id="b2" x="-50%" y="-50%" width="200%" height="200%"><feGaussianBlur stdDeviation="2"/></filter>
<filter id="b1" x="-50%" y="-50%" width="200%" height="200%"><feGaussianBlur stdDeviation="1"/></filter>
<filter id="b05" x="-50%" y="-50%" width="200%" height="200%"><feGaussianBlur stdDeviation=".5"/></filter>
<clipPath id="cArm"><path d="M330.0,690.0 C311.8,686.0 341.8,672.7 346.0,666.0 C350.2,659.3 351.4,656.0 355.0,650.0 C358.6,644.0 362.9,637.5 367.5,630.0 C372.1,622.5 377.5,614.2 382.5,605.0 C387.5,595.8 393.3,584.2 397.5,575.0 C401.7,565.8 404.6,558.3 407.5,550.0 C410.4,541.7 412.5,533.3 415.0,525.0 C417.5,516.7 419.2,507.9 422.5,500.0 C425.8,492.1 430.8,485.0 435.0,477.5 C439.2,470.0 444.2,462.1 447.5,455.0 C450.8,447.9 453.1,440.8 455.0,435.0 C456.9,429.2 454.8,425.0 459.0,420.0 C463.2,415.0 466.5,408.7 480.0,405.0 C493.5,401.3 520.0,400.2 540.0,398.0 C560.0,395.8 586.3,392.0 600.0,392.0 C613.7,392.0 619.1,393.3 622.0,398.0 C624.9,402.7 619.2,413.0 617.5,420.0 C615.8,427.0 613.7,433.3 612.0,440.0 C610.3,446.7 608.8,453.8 607.5,460.0 C606.2,466.2 604.8,472.0 604.5,477.0 C604.2,482.0 605.8,486.2 605.6,490.0 C605.4,493.8 604.6,497.2 603.5,500.0 C602.4,502.8 600.4,504.5 598.7,506.5 C597.0,508.5 596.6,509.2 593.5,511.8 C590.4,514.4 585.8,517.9 580.0,522.3 C574.2,526.7 566.0,532.3 559.0,538.0 C552.0,543.7 545.0,550.0 538.0,556.6 C531.0,563.2 524.0,570.2 517.0,577.7 C510.0,585.2 501.8,593.8 495.8,601.5 C489.8,609.2 485.3,616.9 481.0,624.0 C476.7,631.1 473.3,637.0 470.0,644.0 C466.7,651.0 463.5,658.3 461.0,666.0 C458.5,673.7 476.8,686.0 455.0,690.0 C433.2,694.0 348.2,694.0 330.0,690.0 Z"/></clipPath>
<clipPath id="cHand"><path d="M330.0,690.0 C311.8,686.0 341.8,672.7 346.0,666.0 C350.2,659.3 351.4,656.0 355.0,650.0 C358.6,644.0 362.9,637.5 367.5,630.0 C372.1,622.5 377.5,614.2 382.5,605.0 C387.5,595.8 393.3,584.2 397.5,575.0 C401.7,565.8 404.6,558.3 407.5,550.0 C410.4,541.7 412.5,533.3 415.0,525.0 C417.5,516.7 419.2,507.9 422.5,500.0 C425.8,492.1 430.8,485.0 435.0,477.5 C439.2,470.0 444.2,462.1 447.5,455.0 C450.8,447.9 453.1,440.8 455.0,435.0 C456.9,429.2 454.8,425.0 459.0,420.0 C463.2,415.0 466.5,408.7 480.0,405.0 C493.5,401.3 520.0,400.2 540.0,398.0 C560.0,395.8 586.3,392.0 600.0,392.0 C613.7,392.0 619.1,393.3 622.0,398.0 C624.9,402.7 619.2,413.0 617.5,420.0 C615.8,427.0 613.7,433.3 612.0,440.0 C610.3,446.7 608.8,453.8 607.5,460.0 C606.2,466.2 604.8,472.0 604.5,477.0 C604.2,482.0 605.8,486.2 605.6,490.0 C605.4,493.8 604.6,497.2 603.5,500.0 C602.4,502.8 600.4,504.5 598.7,506.5 C597.0,508.5 596.6,509.2 593.5,511.8 C590.4,514.4 585.8,517.9 580.0,522.3 C574.2,526.7 566.0,532.3 559.0,538.0 C552.0,543.7 545.0,550.0 538.0,556.6 C531.0,563.2 524.0,570.2 517.0,577.7 C510.0,585.2 501.8,593.8 495.8,601.5 C489.8,609.2 485.3,616.9 481.0,624.0 C476.7,631.1 473.3,637.0 470.0,644.0 C466.7,651.0 463.5,658.3 461.0,666.0 C458.5,673.7 476.8,686.0 455.0,690.0 C433.2,694.0 348.2,694.0 330.0,690.0 Z"/><path d="M562.0,307.0 C561.8,303.2 563.5,303.2 565.0,302.5 C566.5,301.8 567.7,300.9 571.0,302.5 C574.3,304.1 579.8,307.9 585.0,312.0 C590.2,316.1 597.8,321.8 602.0,327.0 C606.2,332.2 607.7,338.0 610.0,343.0 C612.3,348.0 613.3,351.3 616.0,357.0 C618.7,362.7 624.1,372.2 626.0,377.0 C627.9,381.8 627.9,382.8 627.5,386.0 C627.1,389.2 624.9,391.7 623.5,396.0 C622.1,400.3 620.4,406.3 619.0,412.0 C617.6,417.7 618.2,425.3 615.0,430.0 C611.8,434.7 607.5,439.7 600.0,440.0 C592.5,440.3 574.2,438.7 570.0,432.0 C565.8,425.3 572.3,407.8 575.0,400.0 C577.7,392.2 584.3,389.7 586.0,385.0 C587.7,380.3 586.0,376.5 585.0,372.0 C584.0,367.5 582.2,362.5 580.0,358.0 C577.8,353.5 574.3,350.5 572.0,345.0 C569.7,339.5 567.7,331.3 566.0,325.0 C564.3,318.7 562.2,310.8 562.0,307.0 Z"/></clipPath>
<clipPath id="cThumb"><path d="M459.0,420.0 C458.9,412.5 462.1,406.7 463.5,400.0 C464.9,393.3 466.3,387.7 467.5,380.0 C468.7,372.3 469.8,362.0 470.5,354.0 C471.2,346.0 470.9,337.2 471.5,332.0 C472.1,326.8 472.6,325.1 474.0,323.0 C475.4,320.9 477.7,320.1 480.0,319.5 C482.3,318.9 485.7,319.0 488.0,319.5 C490.3,320.0 492.4,320.8 494.0,322.5 C495.6,324.2 495.8,325.4 497.5,330.0 C499.2,334.6 501.6,342.7 504.0,350.0 C506.4,357.3 510.2,367.3 512.0,374.0 C513.8,380.7 514.8,384.8 515.0,390.0 C515.2,395.2 513.8,400.5 513.5,405.0 C513.2,409.5 512.1,412.7 513.0,417.0 C513.9,421.3 516.8,426.3 519.0,431.0 C521.2,435.7 526.7,440.5 526.0,445.0 C525.3,449.5 521.8,455.2 515.0,458.0 C508.2,460.8 493.5,464.2 485.0,462.0 C476.5,459.8 468.3,452.0 464.0,445.0 C459.7,438.0 459.1,427.5 459.0,420.0 Z"/></clipPath>
<clipPath id="cIdx"><path d="M562.0,307.0 C561.8,303.2 563.5,303.2 565.0,302.5 C566.5,301.8 567.7,300.9 571.0,302.5 C574.3,304.1 579.8,307.9 585.0,312.0 C590.2,316.1 597.8,321.8 602.0,327.0 C606.2,332.2 607.7,338.0 610.0,343.0 C612.3,348.0 613.3,351.3 616.0,357.0 C618.7,362.7 624.1,372.2 626.0,377.0 C627.9,381.8 627.9,382.8 627.5,386.0 C627.1,389.2 624.9,391.7 623.5,396.0 C622.1,400.3 620.4,406.3 619.0,412.0 C617.6,417.7 618.2,425.3 615.0,430.0 C611.8,434.7 607.5,439.7 600.0,440.0 C592.5,440.3 574.2,438.7 570.0,432.0 C565.8,425.3 572.3,407.8 575.0,400.0 C577.7,392.2 584.3,389.7 586.0,385.0 C587.7,380.3 586.0,376.5 585.0,372.0 C584.0,367.5 582.2,362.5 580.0,358.0 C577.8,353.5 574.3,350.5 572.0,345.0 C569.7,339.5 567.7,331.3 566.0,325.0 C564.3,318.7 562.2,310.8 562.0,307.0 Z"/></clipPath>
<clipPath id="cBody"><path d="M492.300,310 C493,303.500 500,299.500 509,295.500 C522,290 540,286 548,286 C552.500,286.300 555,288 556,291.500 L582,374.500 C584.500,384 582,392 571,400 C558,408 538,411 529,408 C523,405 521,400 519.500,396 Z"/></clipPath>
<clipPath id="cPhoto"><rect x="342" y="102" width="373.300" height="561.800"/></clipPath>
</defs>
<g clip-path="url(#cPhoto)">
<rect x="342" y="102" width="373.300" height="561.800" fill="#e9dcd7"/>
<g filter="url(#b05)">
<!-- back fingers -->
<path d="M452.0,405.0 C452.7,402.5 453.7,400.3 456.0,399.0 C458.3,397.7 463.7,396.8 466.0,397.0 C468.3,397.2 469.7,396.2 470.0,400.0 C470.3,403.8 470.0,416.2 468.0,420.0 C466.0,423.8 460.7,424.0 458.0,423.0 C455.3,422.0 453.0,417.0 452.0,414.0 C451.0,411.0 451.3,407.5 452.0,405.0 Z" fill="#d3a184"/><path d="M452.0,405.0 C452.4,403.5 453.8,400.8 456.0,399.5 C458.2,398.2 463.5,397.1 465.0,397.5 C466.5,397.9 466.2,400.9 465.0,402.0 C463.8,403.1 459.9,402.9 458.0,404.0 C456.1,405.1 454.5,408.3 453.5,408.5 C452.5,408.7 451.6,406.5 452.0,405.0 Z" fill="#efc5be"/>
<path d="M431.0,441.0 C432.0,438.4 436.5,433.9 440.0,431.5 C443.5,429.1 448.3,426.8 452.0,426.5 C455.7,426.2 461.0,426.2 462.0,430.0 C463.0,433.8 460.3,444.8 458.0,449.0 C455.7,453.2 451.0,454.5 448.0,455.0 C445.0,455.5 442.3,453.3 440.0,452.0 C437.7,450.7 435.5,448.8 434.0,447.0 C432.5,445.2 430.0,443.6 431.0,441.0 Z" fill="#dca58c"/><path d="M431.3,441.0 C432.0,438.6 436.6,433.7 440.0,431.3 C443.4,428.9 449.2,426.4 451.5,426.5 C453.8,426.6 454.9,429.8 453.5,432.0 C452.1,434.2 445.9,437.2 443.0,439.5 C440.1,441.8 437.9,445.2 436.0,445.5 C434.1,445.8 430.6,443.4 431.3,441.0 Z" fill="#f1c6be"/>
<!-- arm + palm + index -->
<g clip-path="url(#cHand)">
<rect x="342" y="290" width="300" height="400" fill="url(#gSkin)"/>
<path d="M612,450 L600,484 L572,512 L542,540 L516,566 L497,590 L482,613 L470,636 L458,668" fill="none" stroke="#70401f" stroke-width="64" filter="url(#b12)" opacity=".8"/>
<path d="M598,484 L593,491 L567,514 L537,540 L511,566 L491,589 L475,613 L462,636 L449,668" fill="none" stroke="url(#gCore)" stroke-width="22" filter="url(#b5)"/>
<path d="M604,481 L585.500,501 L559,525 L533,551 L506,580 L490,602 L520,640 L640,520 L620,470 Z" fill="url(#gBand)" filter="url(#b1)"/>
<path d="M604,481.500 L585.500,501 L559,525 L533,551 L506,580" fill="none" stroke="url(#gLine)" stroke-width="1.800" filter="url(#b1)"/>
<path d="M563,306 Q568,302 574,306 L580,318 L570,330 Z" fill="#e9c3ab" filter="url(#b2)" opacity=".8"/>
<path d="M591,336 Q585,341 580.500,350" fill="none" stroke="#a9704b" stroke-width="1.600" filter="url(#b05)" opacity=".85"/>
<ellipse cx="579" cy="343" rx="5" ry="8" transform="rotate(-20 579 343)" fill="#c17a50" filter="url(#b2)" opacity=".6"/>
<path d="M604,326 L618,357 L629,380 L625,397 L618,425 L612,450" fill="none" stroke="#8f5f3f" stroke-width="9" filter="url(#b4)" opacity=".85"/>
<path d="M561,303 L572,345 L582,362 L592,385 L586,404 L576,419 L564,430 L549,446" fill="none" stroke="#e6bb9b" stroke-width="10" filter="url(#b4)"/>
<path d="M520,458 Q560,462 598,440" fill="none" stroke="#c08c65" stroke-width="10" filter="url(#b4)" opacity=".55"/>
<ellipse cx="535" cy="485" rx="50" ry="32" fill="#bd8866" filter="url(#b12)" opacity=".35"/>
</g>
<!-- curled fingers -->
<path d="M510.0,388.0 C516.5,384.0 537.3,393.7 550.0,392.0 C562.7,390.3 580.5,377.5 586.0,378.0 C591.5,378.5 584.5,389.7 583.0,395.0 C581.5,400.3 579.8,405.2 577.0,410.0 C574.2,414.8 570.3,418.8 566.0,424.0 C561.7,429.2 556.0,437.4 551.0,441.0 C546.0,444.6 539.2,446.3 536.0,445.5 C532.8,444.7 533.1,439.2 532.0,436.0 C530.9,432.8 529.7,428.5 529.5,426.0 C529.3,423.5 530.9,422.3 531.0,421.0 C531.1,419.7 533.3,418.8 530.0,418.0 C526.7,417.2 514.3,421.0 511.0,416.0 C507.7,411.0 503.5,392.0 510.0,388.0 Z" fill="#cb9878" filter="url(#b05)"/>
<path d="M531,420 Q550,414 566,402" fill="none" stroke="#d8a681" stroke-width="8" filter="url(#b4)" opacity=".8"/>
<!-- gap -->
<path d="M511.2,416.2 C511.4,413.9 517.9,416.7 521.0,417.0 C524.1,417.3 528.3,417.3 530.0,418.0 C531.7,418.7 531.1,419.7 531.0,421.0 C530.9,422.3 529.1,423.2 529.4,426.0 C529.6,428.8 531.5,434.3 532.5,437.5 C533.5,440.7 535.9,443.8 535.6,445.0 C535.4,446.2 532.4,445.1 531.0,445.0 C529.6,444.9 528.8,446.7 527.0,444.4 C525.2,442.1 522.6,435.7 520.0,431.0 C517.4,426.3 511.0,418.5 511.2,416.2 Z" fill="#e9dcd7"/>
<!-- bottle -->
<clipPath id="cCap"><path d="M478,215 C479,208 490,203 500,201.700 C508,200.800 515,201.500 517.500,207.500 L529,245.500 L489.500,257 Z"/></clipPath>
<g clip-path="url(#cCap)"><rect x="470" y="195" width="70" height="70" fill="url(#gCap)"/>
<path d="M499,203 L516,204 L523,228 L512,232 L503,218 Z" fill="#b7b1b5" filter="url(#b2)" opacity=".9"/>
<path d="M478.500,214 L489.800,257" stroke="#c3bcbe" stroke-width="4" filter="url(#b1)"/>
<path d="M517,206 L529,245" stroke="#cfc8c9" stroke-width="3" filter="url(#b1)"/>
<path d="M486,216 L494,212 L503,222 L512,235 L526,240 L528,246 L490,257 Z" fill="#f8f5f5" filter="url(#b1)"/>
<path d="M480,212 C484,206 496,202 508,202.500 C513,203 516,204 517,207" fill="none" stroke="#c9c3c5" stroke-width="1.500" filter="url(#b05)"/>
</g>
<path d="M494.400,298.800 C497,292 508,285 520,280 C532,276.500 545,276.500 548,281 L557,291 L520,296 L492.500,310 Z" fill="url(#gNeck)"/>
<path d="M494.400,299.500 C497,293 508,286 520,281 C532,277.500 545,277.500 548,282" fill="none" stroke="#7d6b5c" stroke-width="2.500" filter="url(#b05)"/>
<path d="M485.500,264 C488,257 500,251.500 515,247.500 C526,245 535,245.500 537.500,250 L548,281 C545,277 538,276.500 530,277.500 C520,279 508,285 501,290 C497,293 495,296 494.400,298.800 Z" fill="url(#gWood)"/>
<g clip-path="url(#cBody)">
<rect x="480" y="280" width="120" height="140" fill="url(#gBody)"/>
<path d="M492.300,310 C493,303.500 500,299.500 509,295.500 C522,290 540,286 548,286 C553,286.300 556,288 557,291" fill="none" stroke="#f6f5f8" stroke-width="2.200" filter="url(#b05)"/>
<path d="M515,384 Q546,385 584,364 L592,392 L560,414 L523,414 Z" fill="#cfb6b0" filter="url(#b1)"/>
<path d="M519,391 Q548,393 585,372" fill="none" stroke="#a78f8b" stroke-width="2" filter="url(#b05)" opacity=".75"/>
<path d="M522,399.500 Q551,402 584,383" fill="none" stroke="#f4efee" stroke-width="4" filter="url(#b1)"/>
<path d="M528,406 Q552,408 576,396" fill="none" stroke="#dcc3ba" stroke-width="2.500" filter="url(#b1)"/>
<path d="M517,386 Q547,387 584,366" fill="none" stroke="#bca8a6" stroke-width="1.300" filter="url(#b05)" opacity=".8"/>
<path d="M493,310 L520,397" fill="none" stroke="#c9c1c4" stroke-width="5" filter="url(#b2)" opacity=".8"/>
</g>
<!-- label -->
<g transform="translate(502.600,310.300) rotate(-15.800)">
<text x="0" y="0" font-family="Liberation Sans, sans-serif" font-size="7.600" textLength="47" lengthAdjust="spacing" fill="#c0b3b0">NEAUTHY</text>
<rect x="1.800" y="1.900" width="47" height="3.300" fill="#db8849"/>
<text x="17" y="4.400" font-family="Liberation Sans, sans-serif" font-size="2.200" letter-spacing=".5" fill="#f0d9c6">SKIN CARE</text>
<text x="11" y="12.300" font-family="Liberation Serif, serif" font-style="italic" font-size="7" fill="#d9c5b8">Radiance</text>
</g>
<!-- thumb -->
<g clip-path="url(#cThumb)">
<rect x="440" y="310" width="100" height="170" fill="url(#gSkin)"/>
<path d="M498,330 L513,376 L516,395 L514,418 L527,445" fill="none" stroke="#b07c56" stroke-width="6" filter="url(#b2)" opacity=".75"/>
<path d="M492,335 L503,372 L505,400 L502,425" fill="none" stroke="#c28e6c" stroke-width="20" filter="url(#b4)" opacity=".7"/>
<path d="M469,377 Q482,386 499,376 L500,384 Q484,394 469,385 Z" fill="#b9845c" filter="url(#b1)" opacity=".7"/>
<path d="M470,379 Q480,384 496,374" fill="none" stroke="#b78560" stroke-width="1.200" filter="url(#b05)"/>
<path d="M470,388 Q482,392 497,382" fill="none" stroke="#bd8b66" stroke-width="1" filter="url(#b05)"/>
<ellipse cx="535" cy="485" rx="50" ry="32" fill="#bd8866" filter="url(#b12)" opacity=".35"/>
<path d="M510,415 L517,430 L524.500,444" fill="none" stroke="#c17c53" stroke-width="5" filter="url(#b1)" opacity=".85"/>
<path d="M473.0,326.0 C473.7,322.9 474.7,322.5 476.5,321.5 C478.3,320.5 481.6,320.0 484.0,320.0 C486.4,320.0 489.3,320.5 491.0,321.5 C492.7,322.5 493.6,323.2 494.0,326.0 C494.4,328.8 494.2,334.7 493.5,338.0 C492.8,341.3 492.2,343.8 490.0,346.0 C487.8,348.2 482.8,350.3 480.0,351.5 C477.2,352.7 474.2,354.9 473.0,353.0 C471.8,351.1 472.5,344.5 472.5,340.0 C472.5,335.5 472.3,329.1 473.0,326.0 Z" fill="#f0c8c4"/>
<path d="M474,327 Q477,322 484,321 Q490,321.500 493,325" fill="none" stroke="#f8dedb" stroke-width="1.200" filter="url(#b05)"/>
</g>
</g>
</g>
</svg>

</body>
</html>
